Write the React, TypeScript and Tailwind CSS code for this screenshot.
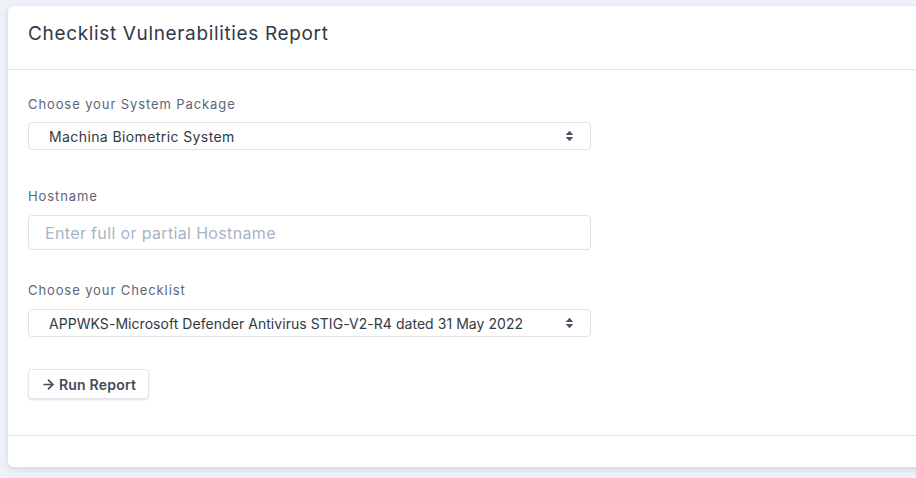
import { ArrowRight } from "lucide-react"

function UpDown() {
  return (
    <svg width="9" height="12" viewBox="0 0 9 12" className="fill-[#495366]">
      <path d="M4.5 0.8 L8.3 5 H0.7 Z" />
      <path d="M4.5 11.2 L8.3 7 H0.7 Z" />
    </svg>
  )
}

function SelectBox({ value, wide }: { value: string; wide?: boolean }) {
  return (
    <div className="flex h-[28px] w-[563px] items-center justify-between rounded-[4px] border border-[#dbe2ec] bg-white pl-[20px] pr-[16px] text-[14px] text-[#313a46]">
      <span className={wide ? "tracking-[0.4px]" : "tracking-[0.05px]"}>{value}</span>
      <UpDown />
    </div>
  )
}

function Label({ children }: { children: string }) {
  return <div className="text-[13px] leading-[20px] tracking-[0.9px] text-[#5b6678]">{children}</div>
}

export default function App() {
  return (
    <div className="h-[478px] w-[916px] overflow-hidden bg-[#eef2f8] pl-[8px] pt-[6px]" style={{ fontFamily: "Inter, 'Noto Sans', sans-serif" }}>
      <div className="w-[940px] rounded-[6px] bg-white shadow-[0_2px_6px_rgba(120,130,150,0.25)]">
        <div className="flex h-[64px] items-center border-b border-[#dde3ec] px-[20px] pb-[6px]">
          <h1 className="text-[19px] tracking-[0.65px] text-[#313a46]">Checklist Vulnerabilities Report</h1>
        </div>
        <div className="flex flex-col px-[20px] pt-[24px]">
          <Label>Choose your System Package</Label>
          <div className="mt-[8px]">
            <SelectBox value="Machina Biometric System" wide />
          </div>
          <div className="mt-[36px]">
            <Label>Hostname</Label>
          </div>
          <input
            className="mt-[9px] h-[35px] w-[563px] rounded-[4px] border border-[#dbe2ec] px-[16px] text-[16px] tracking-[0.35px] text-[#313a46] outline-none placeholder:text-[#a9b3c4]"
            placeholder="Enter full or partial Hostname"
          />
          <div className="mt-[30px]">
            <Label>Choose your Checklist</Label>
          </div>
          <div className="mt-[9px]">
            <SelectBox value="APPWKS-Microsoft Defender Antivirus STIG-V2-R4 dated 31 May 2022" />
          </div>
          <div className="mt-[32px] pb-[36px]">
            <button className="flex h-[30px] w-[121px] items-center gap-[3px] rounded-[4px] border border-[#e1e5eb] bg-white pl-[12px] text-[14px] font-semibold tracking-[0.2px] text-[#414b5c] shadow-[0_1px_2px_rgba(0,0,0,0.12)]">
              <ArrowRight size={15} strokeWidth={2.75} />
              Run Report
            </button>
          </div>
        </div>
        <div className="h-[32px] border-t border-[#dde3ec]" />
      </div>
    </div>
  )
}
